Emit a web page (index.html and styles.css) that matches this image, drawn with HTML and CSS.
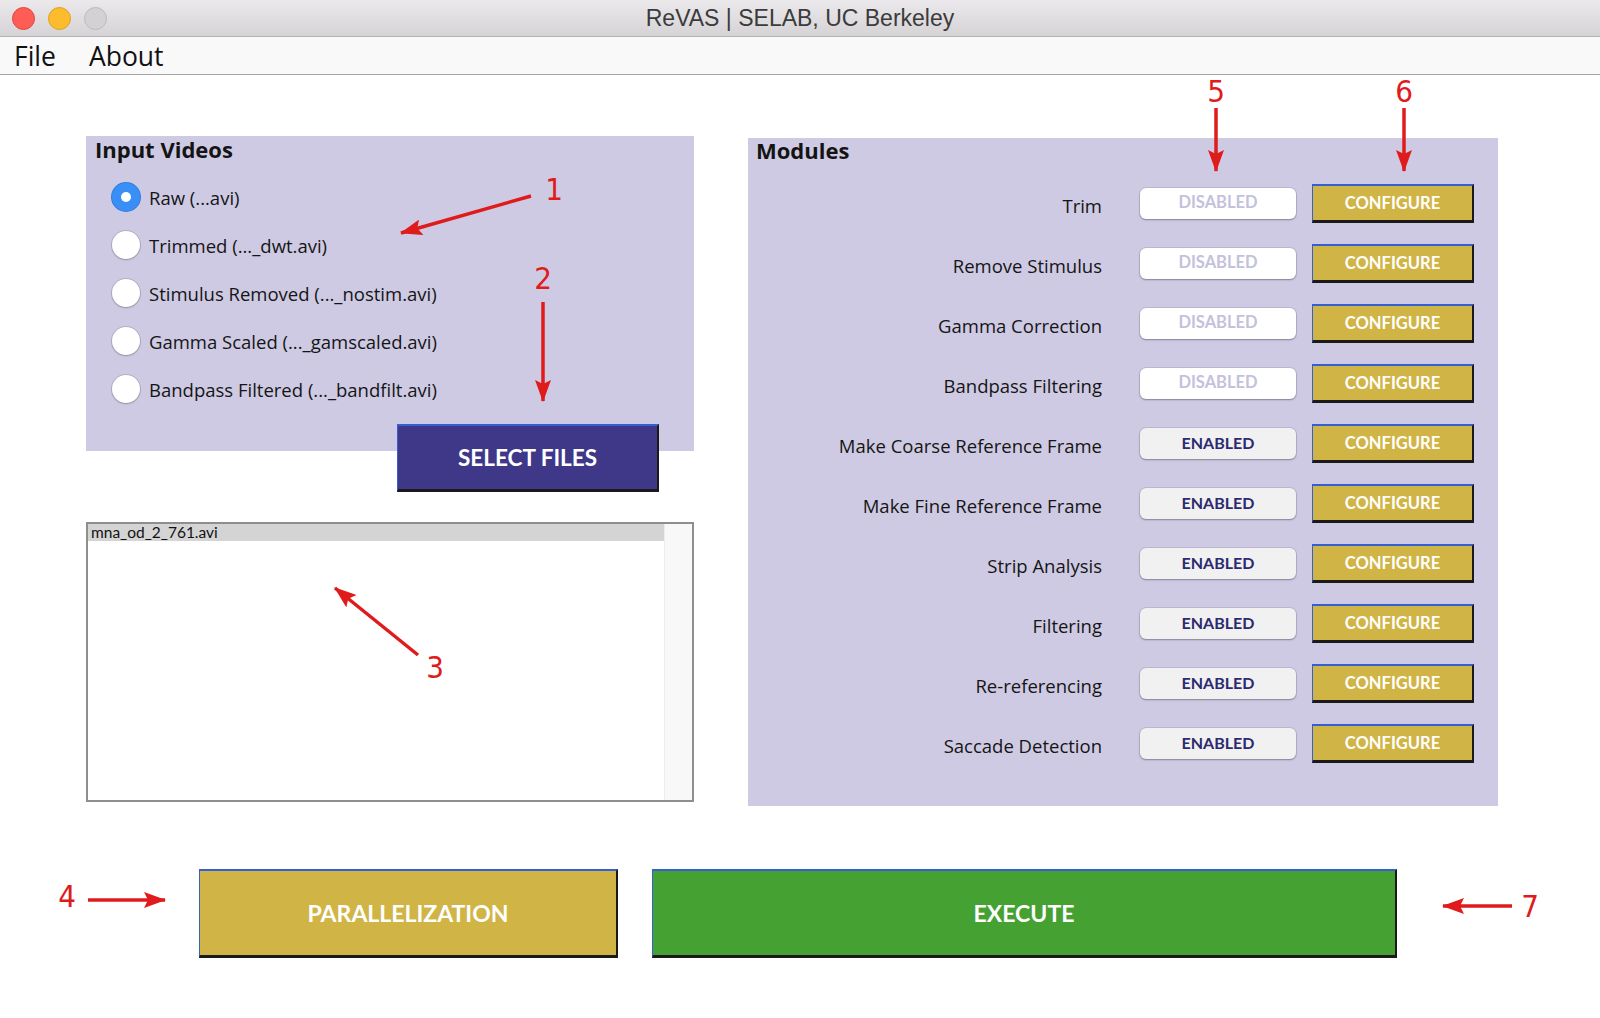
FILE: index.html
```html
<!DOCTYPE html>
<html lang="en">
<head>
<meta charset="utf-8">
<title>ReVAS | SELAB, UC Berkeley</title>
<link rel="stylesheet" href="styles.css">
</head>
<body>
<div class="window">
  <div class="titlebar">
    <div class="lights">
      <span class="light red"></span>
      <span class="light yellow"></span>
      <span class="light gray"></span>
    </div>
    <div class="title">ReVAS | SELAB, UC Berkeley</div>
    <div></div>
  </div>
  <div class="menubar">
    <span class="menu">File</span>
    <span class="menu">About</span>
  </div>

  <div class="content">
    <div class="top">
      <div class="left">
        <section class="panel input-panel">
          <h2 class="panel-title">Input Videos</h2>
          <ul class="radios">
            <li class="radio-row"><span class="radio checked"></span><span class="radio-label">Raw (...avi)</span></li>
            <li class="radio-row"><span class="radio"></span><span class="radio-label">Trimmed (..._dwt.avi)</span></li>
            <li class="radio-row"><span class="radio"></span><span class="radio-label">Stimulus Removed (..._nostim.avi)</span></li>
            <li class="radio-row"><span class="radio"></span><span class="radio-label">Gamma Scaled (..._gamscaled.avi)</span></li>
            <li class="radio-row"><span class="radio"></span><span class="radio-label">Bandpass Filtered (..._bandfilt.avi)</span></li>
          </ul>
          <div class="select-row"><button class="btn select">SELECT FILES</button></div>
        </section>
        <div class="listbox">
          <div class="list-items">
            <div class="list-item selected">mna_od_2_761.avi</div>
          </div>
          <div class="scrolltrack"></div>
        </div>
      </div>

      <section class="panel modules">
        <h2 class="panel-title">Modules</h2>
        <div class="rows">
          <div class="mod-row"><span class="mod-label">Trim</span><button class="toggle off">DISABLED</button><button class="btn cfg">CONFIGURE</button></div>
          <div class="mod-row"><span class="mod-label">Remove Stimulus</span><button class="toggle off">DISABLED</button><button class="btn cfg">CONFIGURE</button></div>
          <div class="mod-row"><span class="mod-label">Gamma Correction</span><button class="toggle off">DISABLED</button><button class="btn cfg">CONFIGURE</button></div>
          <div class="mod-row"><span class="mod-label">Bandpass Filtering</span><button class="toggle off">DISABLED</button><button class="btn cfg">CONFIGURE</button></div>
          <div class="mod-row"><span class="mod-label">Make Coarse Reference Frame</span><button class="toggle on">ENABLED</button><button class="btn cfg">CONFIGURE</button></div>
          <div class="mod-row"><span class="mod-label">Make Fine Reference Frame</span><button class="toggle on">ENABLED</button><button class="btn cfg">CONFIGURE</button></div>
          <div class="mod-row"><span class="mod-label">Strip Analysis</span><button class="toggle on">ENABLED</button><button class="btn cfg">CONFIGURE</button></div>
          <div class="mod-row"><span class="mod-label">Filtering</span><button class="toggle on">ENABLED</button><button class="btn cfg">CONFIGURE</button></div>
          <div class="mod-row"><span class="mod-label">Re-referencing</span><button class="toggle on">ENABLED</button><button class="btn cfg">CONFIGURE</button></div>
          <div class="mod-row"><span class="mod-label">Saccade Detection</span><button class="toggle on">ENABLED</button><button class="btn cfg">CONFIGURE</button></div>
        </div>
      </section>
    </div>

    <div class="bottom">
      <button class="btn big gold">PARALLELIZATION</button>
      <button class="btn big green">EXECUTE</button>
    </div>
  </div>

  <svg class="annot" width="1600" height="1018" viewBox="0 0 1600 1018">
    <defs>
      <marker id="head" viewBox="0 0 22 16" refX="21" refY="8" markerWidth="22" markerHeight="16" markerUnits="userSpaceOnUse" orient="auto">
        <path d="M0,0 L22,8 L0,16 L4,8 Z" fill="#e01b1b"/>
      </marker>
    </defs>
    <g stroke="#e01b1b" stroke-width="3.5" fill="none" marker-end="url(#head)">
      <line x1="531" y1="196" x2="401" y2="233"/>
      <line x1="543" y1="302" x2="543" y2="401"/>
      <line x1="418" y1="655" x2="335" y2="588"/>
      <line x1="88" y1="900" x2="165" y2="900"/>
      <line x1="1216" y1="108" x2="1216" y2="171"/>
      <line x1="1404" y1="108" x2="1404" y2="171"/>
      <line x1="1512" y1="906" x2="1443" y2="906"/>
    </g>
    <g class="annot-num" fill="#e01b1b" text-anchor="middle">
      <text x="554" y="200">1</text>
      <text x="543" y="289">2</text>
      <text x="435" y="678">3</text>
      <text x="67" y="907">4</text>
      <text x="1216" y="102">5</text>
      <text x="1404" y="102">6</text>
      <text x="1530" y="917">7</text>
    </g>
  </svg>
</div>
</body>
</html>
```

FILE: styles.css
```css
* { box-sizing: border-box; }

html, body {
  margin: 0;
  padding: 0;
  background: #ffffff;
}

body {
  width: 1600px;
  height: 1018px;
  overflow: hidden;
  font-family: "Open Sans", Lato, sans-serif;
  color: #111;
}

.window {
  position: relative;
  width: 1600px;
  height: 1018px;
  background: #fff;
}

/* Title bar */
.titlebar {
  height: 37px;
  display: grid;
  grid-template-columns: 1fr auto 1fr;
  align-items: center;
  background: linear-gradient(#ebe9eb, #d5d3d5);
  border-bottom: 1px solid #b4b2b4;
}

.lights {
  display: flex;
  gap: 13px;
  padding-left: 12px;
}

.light {
  width: 23px;
  height: 23px;
  border-radius: 50%;
  display: block;
}
.light.red { background: #fd5d55; border: 1px solid #e1443d; }
.light.yellow { background: #fdbb2e; border: 1px solid #dea024; }
.light.gray { background: #d3d1d3; border: 1px solid #bcbabc; }

.title {
  font-family: "Liberation Sans", Arial, sans-serif;
  font-size: 23px;
  color: #3b3b3b;
}

/* Menu bar */
.menubar {
  height: 38px;
  display: flex;
  align-items: center;
  gap: 33px;
  padding: 2px 0 0 14px;
  background: #f9f9f9;
  border-bottom: 1px solid #a4a4a4;
}

.menu {
  font-family: "Open Sans", sans-serif;
  font-size: 26.5px;
  color: #111;
  line-height: 1;
}

/* Content */
.content {
  padding: 61px 0 0 86px;
}

.top {
  display: flex;
  align-items: flex-start;
  gap: 54px;
}

.left {
  width: 608px;
  display: flex;
  flex-direction: column;
}

.panel {
  background: #cecae3;
}

.panel-title {
  margin: 0;
  font-family: "Open Sans", sans-serif;
  font-size: 22px;
  font-weight: 700;
  color: #141414;
}

.input-panel {
  height: 315px;
  display: flex;
  flex-direction: column;
}

.input-panel .panel-title {
  line-height: 26px;
  padding-left: 9px;
}

.radios {
  list-style: none;
  margin: 11px 0 0;
  padding: 0 0 0 26px;
}

.radio-row {
  height: 48px;
  display: flex;
  align-items: center;
  gap: 9px;
}

.radio {
  width: 28px;
  height: 28px;
  border-radius: 50%;
  background: #fff;
  box-shadow: 0 0 0 1px rgba(0,0,0,0.12), 0 1px 2px rgba(0,0,0,0.2);
  display: flex;
  align-items: center;
  justify-content: center;
  flex: none;
}

.radio.checked {
  background: #3a8ff6;
  box-shadow: 0 0 0 1px #2f7de0;
}
.radio.checked::after {
  content: "";
  width: 10px;
  height: 10px;
  border-radius: 50%;
  background: #fff;
}

.radio-label {
  font-size: 18.5px;
  color: #151515;
  padding-top: 1px;
}

.select-row {
  display: flex;
  justify-content: flex-end;
  margin: 11px 35px 0 0;
  position: relative;
  z-index: 1;
}

.btn {
  font-family: Lato, "Open Sans", sans-serif;
  font-weight: 700;
  color: #fff;
  cursor: pointer;
  border-top: 2px solid #3560d4;
  border-left: 1px solid #3560d4;
  border-right: 2px solid #1a1a1a;
  border-bottom: 3px solid #1a1a1a;
  padding: 0;
}

.btn.select {
  width: 262px;
  height: 68px;
  background: #3f3889;
  font-size: 22.5px;
}

.listbox {
  margin-top: 71px;
  height: 280px;
  border: 2px solid #8e8e8e;
  background: #fff;
  display: flex;
}

.list-items {
  flex: 1;
}

.list-item {
  height: 17px;
  font-family: Lato, sans-serif;
  font-size: 15.5px;
  line-height: 17px;
  padding-left: 3px;
  color: #111;
}

.list-item.selected {
  background: #d4d4d4;
}

.scrolltrack {
  width: 28px;
  background: #f8f8f8;
  border-left: 1px solid #ececec;
}

/* Modules */
.modules {
  margin-top: 2px;
  width: 750px;
  height: 668px;
}

.modules .panel-title {
  line-height: 24px;
  padding-left: 8px;
}

.rows {
  margin-top: 11px;
  display: flex;
  flex-direction: column;
}

.mod-row {
  height: 60px;
  display: flex;
  align-items: center;
  justify-content: flex-end;
  padding-right: 24px;
}

.mod-label {
  font-size: 18.5px;
  color: #151515;
  margin-right: 38px;
  padding-top: 4px;
}

.toggle {
  width: 156px;
  height: 31px;
  border: none;
  border-radius: 6px;
  font-family: Lato, "Open Sans", sans-serif;
  font-weight: 700;
  font-size: 16px;
  box-shadow: 0 0 0 1px rgba(0,0,0,0.08), 0 1px 2px rgba(0,0,0,0.3);
  padding: 0 0 2px;
}

.toggle.off {
  background: #ffffff;
  color: #c4c1dc;
  font-size: 16.5px;
}

.toggle.on {
  background: #f1f1f1;
  color: #2c2a70;
}

.btn.cfg {
  width: 162px;
  height: 39px;
  margin-left: 16px;
  background: #d1b446;
  font-size: 16.5px;
}

/* Bottom buttons */
.bottom {
  display: flex;
  gap: 34px;
  margin: 63px 0 0 113px;
}

.btn.big {
  height: 89px;
  font-size: 23px;
}

.btn.gold {
  width: 419px;
  background: #d1b446;
}

.btn.green {
  width: 745px;
  background: #46a133;
}

/* Annotations */
.annot {
  position: absolute;
  left: 0;
  top: 0;
  pointer-events: none;
}

.annot-num text {
  font-family: "DejaVu Sans Condensed", "Liberation Sans Narrow", "Liberation Sans", sans-serif;
  font-size: 31px;
}
```
